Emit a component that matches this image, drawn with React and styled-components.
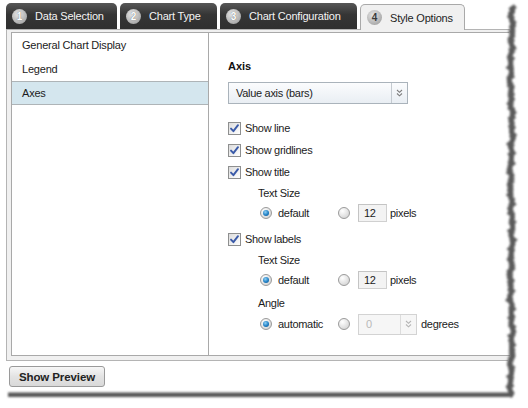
import React from "react";
import styled, { createGlobalStyle, css } from "styled-components";

const GlobalStyle = createGlobalStyle`
  html, body { margin: 0; padding: 0; background: #ffffff; }
  body {
    font-family: "Liberation Sans", Arial, sans-serif;
    font-size: 11px;
    color: #1c1c1c;
  }
  * { box-sizing: border-box; }
`;

const Page = styled.div`
  position: relative;
  width: 528px;
  height: 408px;
  overflow: hidden;
  background: #fff;
`;

const Sheet = styled.div`
  width: 528px;
  height: 392px;
  overflow: hidden;
  padding-top: 3px;
`;

const TabBar = styled.div`
  display: flex;
  align-items: flex-end;
  gap: 3px;
  height: 26px;
  padding-left: 6px;
`;

const Tab = styled.div`
  display: flex;
  align-items: center;
  gap: 8px;
  width: ${(p) => p.$w}px;
  height: 26px;
  padding-left: 6px;
  border-radius: 5px 5px 0 0;
  letter-spacing: -0.2px;
  font-size: 11px;
  ${(p) =>
    p.$active
      ? css`
          position: relative;
          top: 1px;
          height: 26px;
          z-index: 1;
          background: #f0f0f0;
          border: 1px solid #a9a9a9;
          border-bottom: none;
          color: #1e1e1e;
        `
      : css`
          background: linear-gradient(#575757, #353535 45%, #2f2f2f);
          color: #f4f4f4;
        `}
`;

const TabNum = styled.span`
  display: inline-flex;
  align-items: center;
  justify-content: center;
  width: 15px;
  height: 15px;
  border-radius: 50%;
  font-weight: bold;
  font-size: 10px;
  letter-spacing: 0;
  background: radial-gradient(circle at 40% 35%, #e6e6e6, #acacac 70%, #8e8e8e);
  color: ${(p) => (p.$active ? "#3a3a3a" : "#ffffff")};
  text-shadow: ${(p) => (p.$active ? "none" : "0 0 1px #555")};
`;

const Panel = styled.div`
  margin-left: 6px;
  width: 540px;
  height: 332px;
  background: #f0f0f0;
  border: 1px solid #b4b4b4;
  padding: 2px 0 4px 4px;
`;

const Inner = styled.div`
  display: flex;
  height: 100%;
  background: #fff;
  border: 1px solid #a9a9a9;
`;

const SideList = styled.div`
  width: 197px;
  border-right: 1px solid #a9a9a9;
  display: flex;
  flex-direction: column;
`;

const ListItem = styled.div`
  height: 24px;
  display: flex;
  align-items: center;
  padding-left: 10px;
  letter-spacing: -0.2px;
  border-top: 1px solid transparent;
  border-bottom: 1px solid transparent;
  ${(p) =>
    p.$selected &&
    css`
      background: #d4e6ee;
      border-color: #aeb4b7;
    `}
`;

const Content = styled.div`
  flex: 1;
  padding: 26px 0 0 19px;
  display: flex;
  flex-direction: column;
  letter-spacing: -0.3px;
`;

const Heading = styled.div`
  font-weight: bold;
  font-size: 11px;
  line-height: 14px;
  letter-spacing: 0;
  color: #111;
`;

const Select = styled.div`
  margin-top: 9px;
  width: 180px;
  height: 22px;
  display: flex;
  border: 1px solid #aab3bb;
  background: linear-gradient(#fbfcfd, #e9eef3);
`;

const SelectText = styled.div`
  flex: 1;
  display: flex;
  align-items: center;
  padding-left: 7px;
  font-size: 11px;
  color: ${(p) => (p.$disabled ? "#b9b9b9" : "#1c1c1c")};
`;

const SelectArrow = styled.div`
  width: ${(p) => p.$w || 16}px;
  display: flex;
  align-items: center;
  justify-content: center;
  border-left: 1px solid ${(p) => (p.$disabled ? "#dcdcdc" : "#c4cad0")};
`;

const CheckRow = styled.label`
  display: flex;
  align-items: center;
  gap: 4px;
  height: 22px;
  margin-top: ${(p) => p.$mt || 0}px;
`;

const Box = styled.span`
  display: inline-flex;
  width: 13px;
  height: 13px;
  border: 1px solid #8e8f8f;
  background: linear-gradient(135deg, #dcdcdc, #ffffff);
  align-items: center;
  justify-content: center;
`;

const SubLabel = styled.div`
  height: 20px;
  display: flex;
  align-items: center;
  padding-left: 30px;
  margin-top: ${(p) => p.$mt || 0}px;
`;

const RadioRow = styled.div`
  display: flex;
  align-items: center;
  height: ${(p) => p.$h || 20}px;
  padding-left: 32px;
`;

const RadioOpt = styled.label`
  display: flex;
  align-items: center;
  gap: 6px;
  width: ${(p) => (p.$w ? `${p.$w}px` : "auto")};
`;

const Radio = styled.span`
  position: relative;
  display: inline-block;
  width: 12px;
  height: 12px;
  border-radius: 50%;
  border: 1px solid #9a9a9a;
  background: radial-gradient(circle at 35% 30%, #ffffff, #d6d6d6 80%);
  ${(p) =>
    p.$checked &&
    css`
      &::after {
        content: "";
        position: absolute;
        left: 2px;
        top: 2px;
        width: 6px;
        height: 6px;
        border-radius: 50%;
        background: radial-gradient(circle at 40% 35%, #8fd0f5, #1f7fc4 55%, #0f4f87);
      }
    `}
`;

const NumInput = styled.div`
  margin-left: 8px;
  width: 29px;
  height: 18px;
  display: flex;
  align-items: center;
  padding-left: 5px;
  background: #f3f3f3;
  border: 1px solid #d0d0d0;
  border-left-color: #c4c4c4;
  border-top-color: #c4c4c4;
`;

const Unit = styled.span`
  margin-left: ${(p) => p.$ml || 3}px;
`;

const Combo = styled.div`
  margin-left: 8px;
  width: 59px;
  height: 21px;
  display: flex;
  background: #f6f6f6;
  border: 1px solid #d3d3d3;
`;

const Footer = styled.div`
  padding: 5px 0 0 9px;
`;

const Button = styled.button`
  width: 96px;
  height: 21px;
  padding: 0;
  border: 1px solid #9a9a9a;
  border-radius: 3px;
  background: linear-gradient(#f7f7f7, #e3e3e3 50%, #d9d9d9);
  font-family: "Liberation Sans", Arial, sans-serif;
  font-weight: bold;
  font-size: 11.5px;
  letter-spacing: -0.1px;
  color: #222;
`;

const Overlay = styled.svg`
  position: absolute;
  left: 0;
  top: 0;
  pointer-events: none;
`;

function Check() {
  return (
    <svg width="11" height="11" viewBox="0 0 11 11">
      <path d="M2 5.6 L4.4 8.2 L9 2.2" fill="none" stroke="#3a5aa8" strokeWidth="1.9" strokeLinecap="round" strokeLinejoin="round" />
    </svg>
  );
}

function DoubleChevron({ color = "#7d7d7d" }) {
  return (
    <svg width="7" height="8" viewBox="0 0 7 8">
      <path d="M1 1 L3.5 3.3 L6 1 M1 4.5 L3.5 6.8 L6 4.5" fill="none" stroke={color} strokeWidth="1.1" />
    </svg>
  );
}

function CheckBox({ label, mt }) {
  return (
    <CheckRow $mt={mt}>
      <Box>
        <Check />
      </Box>
      <span>{label}</span>
    </CheckRow>
  );
}

function TornEdge() {
  const pts = [];
  for (let y = 6; y <= 396; y += 1.5) {
    const n =
      Math.sin(y * 0.29) * 0.7 +
      Math.sin(y * 1.73 + 1) * 0.7 +
      Math.sin(y * 0.061) * 0.8 +
      Math.sin(y * 3.7) * 0.6 +
      Math.sin(y * 7.3 + 2) * 0.4;
    pts.push([508.5 + n, y]);
  }
  const line = pts.map((p) => `${p[0].toFixed(1)},${p[1]}`).join(" ");
  const mask = `528,0 ${pts[0][0].toFixed(1)},0 ${line} ${pts[pts.length - 1][0].toFixed(1)},408 528,408`;
  const shadow = pts.map((p) => `${(p[0] + 2.8).toFixed(1)},${p[1]}`).join(" ");
  const endX = pts[pts.length - 1][0];
  return (
    <Overlay width="528" height="408" viewBox="0 0 528 408">
      <defs>
        <filter id="blur" x="-20%" y="-5%" width="140%" height="110%">
          <feGaussianBlur stdDeviation="0.9" />
        </filter>
      </defs>
      <polygon points={mask} fill="#ffffff" />
      <rect x="0" y="392" width="528" height="16" fill="#ffffff" />
      <g filter="url(#blur)">
        <polyline points={shadow} fill="none" stroke="#5a5a5a" strokeWidth="5" />
        <line x1="8" y1="394.8" x2={endX + 3} y2="394.8" stroke="#585858" strokeWidth="4.6" />
      </g>
    </Overlay>
  );
}

const tabs = [
  { n: 1, label: "Data Selection", w: 111 },
  { n: 2, label: "Chart Type", w: 97 },
  { n: 3, label: "Chart Configuration", w: 137 },
  { n: 4, label: "Style Options", w: 105, active: true },
];

export default function App() {
  return (
    <>
      <GlobalStyle />
      <Page>
        <Sheet>
          <TabBar>
            {tabs.map((t) => (
              <Tab key={t.n} $w={t.w} $active={t.active}>
                <TabNum $active={t.active}>{t.n}</TabNum>
                <span>{t.label}</span>
              </Tab>
            ))}
          </TabBar>
          <Panel>
            <Inner>
              <SideList>
                <ListItem>General Chart Display</ListItem>
                <ListItem>Legend</ListItem>
                <ListItem $selected>Axes</ListItem>
              </SideList>
              <Content>
                <Heading>Axis</Heading>
                <Select>
                  <SelectText>Value axis (bars)</SelectText>
                  <SelectArrow>
                    <DoubleChevron />
                  </SelectArrow>
                </Select>
                <CheckBox label="Show line" mt={13} />
                <CheckBox label="Show gridlines" />
                <CheckBox label="Show title" />
                <SubLabel>Text Size</SubLabel>
                <RadioRow>
                  <RadioOpt $w={78}>
                    <Radio $checked />
                    <span>default</span>
                  </RadioOpt>
                  <Radio />
                  <NumInput>12</NumInput>
                  <Unit>pixels</Unit>
                </RadioRow>
                <CheckBox label="Show labels" mt={5} />
                <SubLabel>Text Size</SubLabel>
                <RadioRow>
                  <RadioOpt $w={78}>
                    <Radio $checked />
                    <span>default</span>
                  </RadioOpt>
                  <Radio />
                  <NumInput>12</NumInput>
                  <Unit>pixels</Unit>
                </RadioRow>
                <SubLabel $mt={3}>Angle</SubLabel>
                <RadioRow $h={22}>
                  <RadioOpt $w={78}>
                    <Radio $checked />
                    <span>automatic</span>
                  </RadioOpt>
                  <Radio />
                  <Combo>
                    <SelectText $disabled>0</SelectText>
                    <SelectArrow $disabled $w={16}>
                      <DoubleChevron color="#b5b5b5" />
                    </SelectArrow>
                  </Combo>
                  <Unit $ml={4}>degrees</Unit>
                </RadioRow>
              </Content>
            </Inner>
          </Panel>
          <Footer>
            <Button>Show Preview</Button>
          </Footer>
        </Sheet>
        <TornEdge />
      </Page>
    </>
  );
}
